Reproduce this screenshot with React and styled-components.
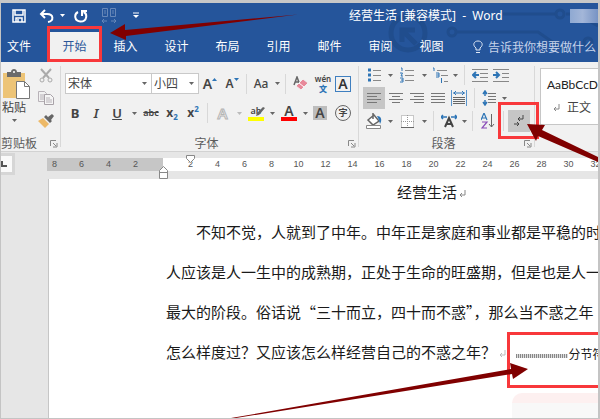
import React from "react";
import styled, { createGlobalStyle } from "styled-components";

const GlobalStyle = createGlobalStyle`
  * { box-sizing: border-box; }
  body {
    margin: 0;
    overflow: hidden;
    font-family: "Noto Sans", "Noto Sans CJK SC", sans-serif;
    font-size: 12px;
    color: #444;
  }
  button, select, input {
    font: inherit;
    color: inherit;
    margin: 0;
    padding: 0;
    border: 0;
    background: none;
  }
  svg { flex: none; }
`;

const Janela = styled.div`
  position: relative;
  display: flex;
  flex-direction: column;
  min-height: 100vh;
  overflow: hidden;
  background: #e6e6e6;
  border: 1px solid #c4c4c4;
  border-top: 3px solid #c8c8c8;
  border-right: 2px solid #c4c4c4;
`;

/* header */

const Cabecalho = styled.header`
  position: relative;
  background: #25559b;
  color: #fff;
`;

const Circuito = styled.svg`
  position: absolute;
  right: 0;
  top: 0;
`;

const BarraTitulo = styled.div`
  position: relative;
  display: flex;
  align-items: center;
  height: 25px;
  padding-left: 5px;
`;

const BotaoRapido = styled.button`
  display: flex;
  flex: none;
  align-items: center;
  justify-content: center;
  width: ${(props) => props.$largura}px;
  height: 24px;
  opacity: ${(props) => (props.$apagado ? 0.3 : 1)};
`;

const Titulo = styled.h1`
  margin: 0 0 0 197px;
  font-size: 12px;
  font-weight: 400;
  line-height: 24px;
  white-space: pre;
`;

const Usuario = styled.span`
  width: 28px;
  height: 14px;
  margin-left: auto;
  background: linear-gradient(90deg, #8fa9d2, #a3b6d8 45%, #7793c4);
`;

const Abas = styled.nav`
  position: relative;
  display: flex;
  align-items: stretch;
  height: 34px;
  padding-top: 4px;
`;

const Aba = styled.button`
  position: relative;
  flex: none;
  width: ${(props) => (props.$arquivo ? 36 : 51)}px;
  margin-right: ${(props) => (props.$arquivo ? 12 : 0)}px;
  line-height: 28px;
  color: ${(props) => (props.$ativa ? "#2b579a" : "#fff")};
  background: ${(props) => (props.$ativa ? "#f1f1f1" : "transparent")};
`;

const Pesquisa = styled.label`
  display: flex;
  align-items: center;
  gap: 5px;
  flex: 1;
  min-width: 0;
  padding-left: 16px;

  input {
    flex: 1;
    min-width: 0;
    color: #c5d3ea;
  }
  input::placeholder {
    color: #c5d3ea;
    opacity: 1;
  }
`;

const Destaque = styled.span`
  position: absolute;
  z-index: 2;
  border: 3px solid #f8383b;
  pointer-events: none;
`;

const DestaqueAba = styled(Destaque)`
  inset: -6px -2px 0;
`;

const DestaqueMarcas = styled(Destaque)`
  inset: -8px -9px -7px -10px;
`;

const DestaqueQuebra = styled(Destaque)`
  top: 329px;
  left: 506px;
  right: -3px;
  height: 56px;
`;

/* ribbon */

const Faixa = styled.section`
  display: flex;
  height: 90px;
  background: #f1f1f1;
  border-bottom: 1px solid #d2d2d2;
`;

const Grupo = styled.div`
  position: relative;
  display: flex;
  flex: none;
  flex-direction: column;
  gap: ${(props) => props.$espaco || 0}px;
  width: ${(props) => props.$largura}px;
  padding: ${(props) => props.$topo || 0}px 0 0 ${(props) => props.$esquerda || 0}px;

  &::after {
    content: "";
    position: absolute;
    right: 0;
    top: 4px;
    bottom: 4px;
    width: 1px;
    background: #d8d8d8;
  }
`;

const Linha = styled.div`
  display: flex;
  align-items: center;
  height: ${(props) => props.$altura || 22}px;
`;

const RotuloGrupo = styled.div`
  display: flex;
  align-items: center;
  height: 16px;
  margin-top: auto;
  padding-right: 3px;
  color: #5c5c5c;

  span {
    flex: 1;
    text-align: ${(props) => (props.$inicio ? "left" : "center")};
  }
`;

const Botao = styled.button`
  position: relative;
  display: flex;
  flex: none;
  align-items: center;
  justify-content: center;
  width: ${(props) => props.$largura || 22}px;
  height: 22px;
  background: ${(props) => (props.$marcado ? "#c6c6c6" : "transparent")};
`;

const Letra = styled.span`
  font-size: ${(props) => props.$tamanho || 14}px;
  font-weight: ${(props) => props.$peso || 600};
  font-style: ${(props) => (props.$italico ? "italic" : "normal")};
  text-decoration: ${(props) => props.$traco || "none"};
  line-height: 16px;

  sub, sup {
    font-size: 8px;
    line-height: 0;
    color: #2e75b6;
  }
`;

const LetraCaixa = styled(Letra)`
  width: 16px;
  height: 16px;
  line-height: 14px;
  border: 1px solid #3f7fc0;
  color: #333;
`;

const LetraSombra = styled(Letra)`
  width: 14px;
  line-height: 14px;
  background: #bdbdbd;
`;

const LetraCirculo = styled(Letra)`
  width: 16px;
  height: 16px;
  line-height: 14px;
  border: 1px solid #666;
  border-radius: 50%;
`;

const LetraCor = styled(Letra)`
  width: 16px;
  line-height: 12px;
  border-bottom: 4px solid ${(props) => props.$cor};
`;

const LetraVazada = styled(Letra)`
  color: #f4f4f4;
  -webkit-text-stroke: 1px #b5b5b5;
`;

const Caneta = styled.svg`
  position: absolute;
  left: 9px;
  top: 3px;
`;

const Pinyin = styled.span`
  display: flex;
  flex-direction: column;
  font-size: 8px;
  font-weight: 600;
  line-height: 10px;

  b { color: #2e75b6; }
`;

const Divisor = styled.span`
  flex: none;
  width: 1px;
  height: 20px;
  margin: 0 ${(props) => props.$margem}px;
  background: #d8d8d8;
`;

const Combo = styled.div`
  position: relative;
  display: flex;
  align-items: center;
  flex: none;
  width: ${(props) => props.$largura}px;
  height: 21px;
  background: #fff;
  border: 1px solid #c9c9c9;

  & + & { border-left: 0; }

  select {
    appearance: none;
    width: 100%;
    height: 100%;
    padding-left: 2px;
    outline: 0;
  }
  svg {
    position: absolute;
    right: 4px;
    pointer-events: none;
  }
`;

const AreaColar = styled.div`
  display: flex;
  justify-content: space-between;
  padding-right: 4px;
`;

const BotaoColar = styled.button`
  display: flex;
  flex-direction: column;
  align-items: flex-start;
  width: 30px;
  padding-top: 5px;
  line-height: 18px;

  svg + span { padding-left: 1px; }
  span + svg { margin: 2px 0 0 11px; }
`;

const Coluna = styled.div`
  display: flex;
  flex-direction: column;
  gap: 1px;
`;

const Estilo = styled.button`
  flex: 1;
  min-width: 0;
  margin: 6px 0 26px 5px;
  padding: 0 6px;
  overflow: hidden;
  text-align: left;
  white-space: nowrap;
  background: #fff;
  border: 1px solid #c6c6c6;
  border-right: 0;

  span {
    display: block;
    font-family: Lato, "Noto Sans CJK SC", sans-serif;
    font-size: 12px;
    line-height: 22px;
    color: #222;
  }
  small {
    display: flex;
    align-items: center;
    gap: 7px;
    padding-left: 6px;
    font-size: 12px;
    line-height: 24px;
  }
`;

/* ruler and page */

const AreaRegua = styled.div`
  display: flex;
  align-items: flex-start;
  height: 27px;
  padding-top: 1px;
`;

const Tabulador = styled.button`
  flex: none;
  display: flex;
  align-items: center;
  width: 14px;
  height: 22px;
  margin-right: 32px;
  background: #fafafa;
  border: 3px solid #d6d6d6;
  border-left: 0;
`;

const Regua = styled.div`
  position: relative;
  display: flex;
  flex: 1;
  min-width: 0;
  height: 13px;
  margin-top: 5px;
  font-family: "Liberation Sans", sans-serif;
  font-size: 9px;
  line-height: 13px;
  color: #555;
`;

const Trecho = styled.div`
  display: flex;
  flex: ${(props) => (props.$margem ? "0 0 116px" : "1")};
  min-width: 0;
  overflow: hidden;
  justify-content: ${(props) => (props.$margem ? "flex-end" : "flex-start")};
  padding: 0 ${(props) => (props.$margem ? 14 : 0)}px 0 ${(props) => (props.$margem ? 0 : 14)}px;
  background: ${(props) => (props.$margem ? "#c6c6c6" : "#fff")};

  span {
    flex: none;
    width: 27px;
    text-align: center;
  }
`;

const Recuo = styled.svg`
  position: absolute;
  left: 112px;
  top: -4px;
`;

const Pagina = styled.main`
  flex: 1;
  margin-left: 47px;
  padding-left: 117px;
  overflow: hidden;
  background: #fff;
  border-left: 1px solid #c6c6c6;
  font-family: "Noto Sans CJK SC", sans-serif;
  color: #1a1a1a;
`;

const TituloTexto = styled.h2`
  margin: 0;
  padding: 0 0 7px 231px;
  font-size: 15px;
  font-weight: 400;
  line-height: 26px;
  white-space: nowrap;

  svg { margin-left: 2px; }
`;

const Paragrafo = styled.p`
  margin: 0;
  padding-left: ${(props) => (props.$recuo ? 30 : 0)}px;
  font-size: 15px;
  font-weight: 400;
  line-height: 40px;
  white-space: nowrap;
`;

const QuebraSecao = styled.span`
  display: inline-flex;
  align-items: center;
  margin-left: 10px;
  font-size: 12px;

  &::before {
    content: "";
    width: 52px;
    height: 4px;
    margin-top: 4px;
    background: repeating-linear-gradient(90deg, #888 0 1px, #ddd 1px 2px);
  }
`;

const Setas = styled.svg`
  position: absolute;
  left: -1px;
  top: -3px;
  z-index: 3;
  pointer-events: none;
`;

const MarcaDagua = styled.div`
  position: absolute;
  right: 0;
  bottom: 0;
  width: 86px;
  height: 25px;
  border-radius: 10px 0 0 0;
  background: linear-gradient(#fdf0f0 0 10px, #f8f8f8 10px);
`;

const abas = ["开始", "插入", "设计", "布局", "引用", "邮件", "审阅", "视图"];
const numeros = Array.from({ length: 16 }, (_, i) => (i + 1) * 2);

const Icone = ({ w = 16, h = 16, children }) => (
  <svg width={w} height={h} viewBox={`0 0 ${w} ${h}`} fill="none" stroke="#666" aria-hidden="true">
    {children}
  </svg>
);

const Triangulo = ({ cor = "#666" }) => (
  <svg width="5" height="3" viewBox="0 0 5 3" aria-hidden="true">
    <path d="M0 0h5L2.5 3z" fill={cor} />
  </svg>
);

const Menu = ({ largura, nome, apagado }) => (
  <Botao $largura={largura} aria-label={nome}>
    <Triangulo cor={apagado ? "#bbb" : "#666"} />
  </Botao>
);

const Iniciador = ({ nome }) => (
  <button aria-label={nome}>
    <Icone w={8} h={8}>
      <path d="M.5 6V.5H6M3 3l3 3M7 3v4H3" stroke="#888" />
    </Icone>
  </button>
);

const MarcaParagrafo = ({ cor = "#888" }) => (
  <svg width="7" height="8" viewBox="0 0 7 8" fill="none" stroke={cor} aria-hidden="true">
    <path d="M6 0v5H1M3 3L1 5l2 2" />
  </svg>
);

const Alinhamento = ({ linhas }) => (
  <Icone w={14} h={13}>
    <path d={linhas} stroke="#777" />
  </Icone>
);

function BarraRapida() {
  return (
    <BarraTitulo>
      <BotaoRapido $largura={26} aria-label="保存">
        <Icone w={14} h={14}>
          <path d="M1 1h12v12H1zM3 1v5h8V1M4 13V9h6v4M6 10v3" stroke="#fff" strokeWidth="1.5" />
        </Icone>
      </BotaoRapido>
      <BotaoRapido $largura={28} aria-label="撤消">
        <Icone w={15} h={14}>
          <path d="M6 1L2 5l4 4M2 5h6c7 0 7 7 1 8" stroke="#fff" strokeWidth="2" />
        </Icone>
      </BotaoRapido>
      <BotaoRapido $largura={5} aria-label="撤消列表"><Triangulo cor="#fff" /></BotaoRapido>
      <BotaoRapido $largura={32} aria-label="重复">
        <Icone w={14} h={14}>
          <path d="M4 3C0 5 0 12 6.5 12.500c7 0 7-8 3-9.500M8 7V2h5" stroke="#fff" strokeWidth="2" />
        </Icone>
      </BotaoRapido>
      <BotaoRapido $largura={23} $apagado aria-label="多页">
        <Icone w={16} h={17}>
          <path d="M1.5 1.5h5v8h-5zM9.5 1.5h5v8h-5zM3 4h2M3 6h2M11 4h2M11 6h2M1 14h5M3 12l-2 2 2 2M10 14h5M13 12l2 2-2 2" stroke="#fff" />
        </Icone>
      </BotaoRapido>
      <BotaoRapido $largura={32} aria-label="自定义快速访问工具栏">
        <Icone w={6} h={7}>
          <path d="M0 1h6" stroke="#fff" />
          <path d="M0 3h6L3 6z" fill="#fff" stroke="none" />
        </Icone>
      </BotaoRapido>
      <Titulo>经营生活 [兼容模式]  -  Word</Titulo>
      <Usuario />
    </BarraTitulo>
  );
}

function GrupoAreaTransferencia() {
  return (
    <Grupo $largura={60} $topo={2}>
      <AreaColar>
        <BotaoColar>
          <svg width="30" height="30" viewBox="0 0 30 30" aria-hidden="true">
            <path d="M2 4h22v25H2z" fill="#edc477" />
            <path d="M6 3h4c0-4 6-4 6 0h4v5H6z" fill="#6b6b6b" />
            <circle cx="13" cy="3" r="1" fill="#fff" />
            <path d="M15.5 12.5h8l5 5v12h-13z" fill="#fff" stroke="#777" />
            <path d="M23.5 12.5v5h5" fill="none" stroke="#777" />
          </svg>
          <span>粘贴</span>
          <Triangulo />
        </BotaoColar>
        <Coluna>
          <Botao aria-label="剪切">
            <Icone w={14} h={15}>
              <path d="M2 1l8 9M12 1L4 10" stroke="#aaa" strokeWidth="2" />
              <circle cx="3" cy="12" r="2" stroke="#aaa" />
              <circle cx="11" cy="12" r="2" stroke="#aaa" />
            </Icone>
          </Botao>
          <Botao aria-label="复制">
            <Icone w={16} h={14}>
              <path d="M.5.5h6l2 2v8h-8zM2 4h5M2 6h5M2 8h5" stroke="#b8b2b8" />
              <path d="M6.5 3.5h6l3 3v7h-9z" fill="#f5f5f5" stroke="#a8a2a8" />
              <path d="M8 7h4M8 9h6M8 11h6" stroke="#b8b2b8" />
            </Icone>
          </Botao>
          <Botao aria-label="格式刷">
            <Icone w={16} h={14}>
              <path d="M0 7l5-3 6 6-4 4z" fill="#edb968" stroke="none" />
              <path d="M6 3l2-2 6 6-2 2zM10 3l4-3 2 2-3 4z" fill="#666" stroke="none" />
            </Icone>
          </Botao>
        </Coluna>
      </AreaColar>
      <RotuloGrupo $inicio>
        <span>剪贴板</span>
        <Iniciador nome="剪贴板选项" />
      </RotuloGrupo>
    </Grupo>
  );
}

function GrupoFonte() {
  return (
    <Grupo $largura={298} $topo={11} $esquerda={4} $espaco={8}>
      <Linha $altura={21}>
        <Combo $largura={87}>
          <select aria-label="字体"><option>宋体</option></select>
          <Triangulo />
        </Combo>
        <Combo $largura={47}>
          <select aria-label="字号"><option>小四</option></select>
          <Triangulo />
        </Combo>
        <Botao aria-label="增大字号">
          <Letra $tamanho={14}>A</Letra>
          <Icone w={5} h={13}><path d="M0 4h5L2.5 1z" fill="#2e75b6" stroke="none" /></Icone>
        </Botao>
        <Botao aria-label="减小字号">
          <Letra $tamanho={12}>A</Letra>
          <Icone w={5} h={13}><path d="M0 1h5L2.5 4z" fill="#2e75b6" stroke="none" /></Icone>
        </Botao>
        <Divisor $margem={3} />
        <Botao><Letra $tamanho={12} $peso={500}>Aa</Letra></Botao>
        <Menu largura={10} nome="更改大小写" />
        <Divisor $margem={3} />
        <Botao $largura={24} aria-label="清除所有格式">
          <Icone w={16} h={15}>
            <path d="M1 9l3-8 3 8M2 6h4" strokeWidth="1.5" />
            <path d="M3 10l7-7 5 4-7 7z" fill="#e8899a" stroke="#f1f1f1" />
            <path d="M6 7l5 4" stroke="#fff" />
          </Icone>
        </Botao>
        <Botao $largura={20}><Pinyin>wén<b>文</b></Pinyin></Botao>
        <Botao $largura={20}><LetraCaixa>A</LetraCaixa></Botao>
      </Linha>
      <Linha>
        <Botao $largura={20}><Letra $tamanho={13} $peso={700}>B</Letra></Botao>
        <Botao><Letra $tamanho={13} $italico>I</Letra></Botao>
        <Botao $largura={20}><Letra $tamanho={13} $traco="underline">U</Letra></Botao>
        <Menu largura={14} nome="下划线样式" />
        <Botao $largura={20}><Letra $tamanho={9} $traco="line-through">abc</Letra></Botao>
        <Botao><Letra $tamanho={12} $peso={700}>x<sub>2</sub></Letra></Botao>
        <Botao $largura={20}><Letra $tamanho={12} $peso={700}>x<sup>2</sup></Letra></Botao>
        <Divisor $margem={4} />
        <Botao $largura={21}><LetraVazada $tamanho={15}>A</LetraVazada></Botao>
        <Menu largura={12} nome="文本效果" apagado />
        <Botao>
          <LetraCor $tamanho={9} $cor="#ffff00">ab</LetraCor>
          <Caneta width="12" height="13" viewBox="0 0 12 13" aria-hidden="true">
            <path d="M3 8l6-6 2 1-6 7-3 1z" fill="#666" />
          </Caneta>
        </Botao>
        <Menu largura={10} nome="突出显示颜色" />
        <Botao $largura={24}><LetraCor $cor="#ff0000">A</LetraCor></Botao>
        <Menu largura={8} nome="字体颜色" />
        <Botao><LetraSombra>A</LetraSombra></Botao>
        <Botao $largura={24}><LetraCirculo $tamanho={9}>字</LetraCirculo></Botao>
      </Linha>
      <RotuloGrupo>
        <span>字体</span>
        <Iniciador nome="字体选项" />
      </RotuloGrupo>
    </Grupo>
  );
}

function GrupoParagrafo() {
  return (
    <Grupo $largura={176} $topo={2} $esquerda={4} $espaco={1}>
      <Linha>
        <Botao aria-label="项目符号">
          <Icone w={13} h={14}>
            <path d="M0 2h3M0 7h3M0 12h3" stroke="#2e75b6" strokeWidth="3" />
            <path d="M5 2.5h8M5 7.5h8M5 12.5h8" stroke="#888" />
          </Icone>
        </Botao>
        <Menu largura={10} nome="项目符号库" />
        <Botao $largura={24} aria-label="编号">
          <Icone w={14} h={16}>
            <path d="M1 1h1v3M0 6h2.5L1 9h2M0 11h3v4H0M1 13h2" stroke="#2e75b6" />
            <path d="M5 3.5h9M5 8.5h9M5 13.5h9" stroke="#888" />
          </Icone>
        </Botao>
        <Menu largura={10} nome="编号库" />
        <Botao aria-label="多级列表">
          <Icone w={16} h={16}>
            <path d="M1 1h1v3M4 6h3v4H4M4 8h3M9.5 11v5" stroke="#2e75b6" />
            <path d="M5 3.5h10M9 8.5h7M12 14.5h4" stroke="#888" />
          </Icone>
        </Botao>
        <Menu largura={8} nome="列表库" />
        <Divisor $margem={5} />
        <Botao $largura={20} aria-label="减少缩进量">
          <Icone w={16} h={13}>
            <path d="M0 .5h16M8 4.500h8M8 8.500h8M0 12.500h16" stroke="#888" />
            <path d="M1 6h6M4 3L1 6l3 3" stroke="#2e75b6" strokeWidth="2" />
          </Icone>
        </Botao>
        <Botao aria-label="增加缩进量">
          <Icone w={16} h={13}>
            <path d="M0 .5h16M9 4.500h7M9 8.500h7M0 12.500h16" stroke="#888" />
            <path d="M0 6h6M3 3l3 3-3 3" stroke="#2e75b6" strokeWidth="2" />
          </Icone>
        </Botao>
      </Linha>
      <Linha>
        <Botao $marcado aria-label="左对齐">
          <Alinhamento linhas="M0 1.5h14M0 4.5h10M0 7.5h14M0 10.5h10" />
        </Botao>
        <Botao $largura={21} aria-label="居中">
          <Alinhamento linhas="M0 1.5h14M3 4.5h8M0 7.5h14M3 10.5h8" />
        </Botao>
        <Botao $largura={21} aria-label="右对齐">
          <Alinhamento linhas="M0 1.5h14M4 4.5h10M0 7.5h14M4 10.5h10" />
        </Botao>
        <Botao $largura={21} aria-label="两端对齐">
          <Alinhamento linhas="M0 1.5h14M0 4.5h14M0 7.5h14M0 10.5h14" />
        </Botao>
        <Botao $largura={22} aria-label="分散对齐">
          <Icone w={16} h={16}>
            <path d="M.5 0v16M15.5 0v16" stroke="#5b95cc" />
            <path d="M2 3h12M5 1L3 3l2 2M11 1l2 2-2 2" stroke="#2e75b6" />
            <path d="M2 7.5h12M2 9.5h12M2 11.5h12M2 13.5h12" stroke="#666" />
          </Icone>
        </Botao>
        <Divisor $margem={4} />
        <Botao $largura={20} aria-label="行距">
          <Icone w={14} h={16}>
            <path d="M3 1v5M1 4l2-3 2 3M3 10v5M1 12l2 3 2-3" stroke="#2e75b6" strokeWidth="1.5" />
            <path d="M6 3.5h8M6 6.5h8M6 9.5h8M6 12.5h8" stroke="#777" />
          </Icone>
        </Botao>
        <Menu largura={10} nome="行距选项" />
      </Linha>
      <Linha>
        <Botao aria-label="底纹">
          <Icone w={16} h={16}>
            <path d="M2 7l6-5 5 6-6 4zM7 0v6" fill="#fff" strokeWidth="1.5" />
            <path d="M11 3c5 0 5 5 3 8l-1-4z" fill="#2e75b6" stroke="none" />
            <path d="M.5 12.5h14v3H.5z" fill="#fff" stroke="#888" />
          </Icone>
        </Botao>
        <Menu largura={10} nome="底纹颜色" />
        <Botao $largura={24} aria-label="边框">
          <Icone w={13} h={13}>
            <path d="M.5 .5h12v12H.5zM6.5 0v12M0 6.5h13" fill="#fff" stroke="#999" strokeDasharray="1 1" />
            <path d="M0 12.5h13" stroke="#666" />
          </Icone>
        </Botao>
        <Menu largura={10} nome="边框选项" />
        <Divisor $margem={4} />
        <Botao aria-label="中文版式">
          <Icone w={16} h={14}>
            <path d="M0 3h6M2 1L0 3l2 2M10 3h6M14 1l2 2-2 2" stroke="#2e75b6" strokeWidth="1.5" />
            <path d="M4 13L8 4l4 9M5 10h6" stroke="#444" strokeWidth="2" />
          </Icone>
        </Botao>
        <Menu largura={8} nome="版式选项" />
        <Divisor $margem={4} />
        <Botao aria-label="排序">
          <Icone w={14} h={16}>
            <path d="M0 7l3-7 3 7M1 5h4" stroke="#2e75b6" strokeWidth="1.2" />
            <path d="M1 9h5l-5 6h5" stroke="#8a4cb8" strokeWidth="1.2" />
            <path d="M10.5 1v13M8 11l2.5 3 2.5-3" />
          </Icone>
        </Botao>
        <Divisor $margem={4} />
        <Botao $marcado aria-label="显示编辑标记">
          <Icone w={12} h={14}>
            <path d="M10 1v4H5M7 3L5 5l2 2M1 10h5M4 8l2 2-2 2" stroke="#444" />
          </Icone>
          <DestaqueMarcas />
        </Botao>
      </Linha>
      <RotuloGrupo>
        <span>段落</span>
        <Iniciador nome="段落选项" />
      </RotuloGrupo>
    </Grupo>
  );
}

class App extends React.Component {
  state = {
    abaAtiva: "开始",
    pesquisa: ""
  };

  onChangePesquisa = (event) => {
    this.setState({ pesquisa: event.target.value });
  };

  render() {
    return (
      <Janela>
        <GlobalStyle />
        <Cabecalho>
          <Circuito width="210" height="59" viewBox="0 0 210 59" fill="none" stroke="#204d8d" strokeWidth="3" aria-hidden="true">
            <circle cx="20" cy="30" r="17" strokeWidth="5" />
            <path d="M28 41L14 27M14 39V27h13" strokeWidth="5" />
            <circle cx="64" cy="29" r="4" />
            <path d="M68 29h82l26 18M115 11h52" />
            <circle cx="172" cy="11" r="4" />
            <circle cx="200" cy="39" r="4" />
            <path d="M178 11h10l22 12" />
          </Circuito>
          <BarraRapida />
          <Abas>
            <Aba $arquivo>文件</Aba>
            {abas.map((aba) => (
              <Aba
                key={aba}
                $ativa={aba === this.state.abaAtiva}
                onClick={() => this.setState({ abaAtiva: aba })}
              >
                {aba}
                {aba === "开始" && <DestaqueAba />}
              </Aba>
            ))}
            <Pesquisa>
              <Icone w={10} h={14}>
                <path d="M3 10V8C-1 5 1 1 5 1s6 4 2 7v2zM3 12.5h4" stroke="#dfe8f5" />
              </Icone>
              <input
                aria-label="告诉我你想要做什么"
                value={this.state.pesquisa}
                onChange={this.onChangePesquisa}
                placeholder="告诉我你想要做什么"
              />
            </Pesquisa>
          </Abas>
        </Cabecalho>

        <Faixa>
          <GrupoAreaTransferencia />
          <GrupoFonte />
          <GrupoParagrafo />
          <Estilo>
            <span>AaBbCcDc</span>
            <small><MarcaParagrafo />正文</small>
          </Estilo>
        </Faixa>

        <AreaRegua>
          <Tabulador aria-label="制表符">
            <Icone w={8} h={8}><path d="M1 1v5h5" stroke="#555" strokeWidth="2" /></Icone>
          </Tabulador>
          <Regua>
            <Trecho $margem>
              {[8, 6, 4, 2].map((n) => <span key={n}>{n}</span>)}
            </Trecho>
            <Trecho>
              {numeros.map((n) => <span key={n}>{n}</span>)}
            </Trecho>
            <Recuo width="40" height="26" viewBox="0 0 40 26" fill="#fff" stroke="#888" aria-hidden="true">
              <path d="M27.5 1.5h8v3l-4 4-4-4z" />
              <path d="M.5 24.5v-8l4-4 4 4v8zM.5 18.5h8" />
            </Recuo>
          </Regua>
        </AreaRegua>

        <Pagina>
          <TituloTexto>经营生活<MarcaParagrafo /></TituloTexto>
          <Paragrafo $recuo>不知不觉，人就到了中年。中年正是家庭和事业都是平稳的时</Paragrafo>
          <Paragrafo>人应该是人一生中的成熟期，正处于生命的旺盛期，但是也是人一</Paragrafo>
          <Paragrafo>最大的阶段。俗话说“三十而立，四十而不惑”，那么当不惑之年</Paragrafo>
          <Paragrafo>
            怎么样度过？又应该怎么样经营自己的不惑之年？{" "}
            <MarcaParagrafo cor="#bbb" />
            <QuebraSecao>分节符</QuebraSecao>
          </Paragrafo>
        </Pagina>

        <MarcaDagua />
        <DestaqueQuebra />
        <Setas width="600" height="419" viewBox="0 0 600 419" fill="#800000" aria-hidden="true">
          <path d="M110 33l15-9v6L298 14.5 126 36v4z" />
          <path d="M527 124l18 1-3 5 56 27v5l-60-26-2 5z" />
          <path d="M231 418l280-49-1-6 18 6-15 10-1-5-276 44z" />
        </Setas>
      </Janela>
    );
  }
}
export default App;
